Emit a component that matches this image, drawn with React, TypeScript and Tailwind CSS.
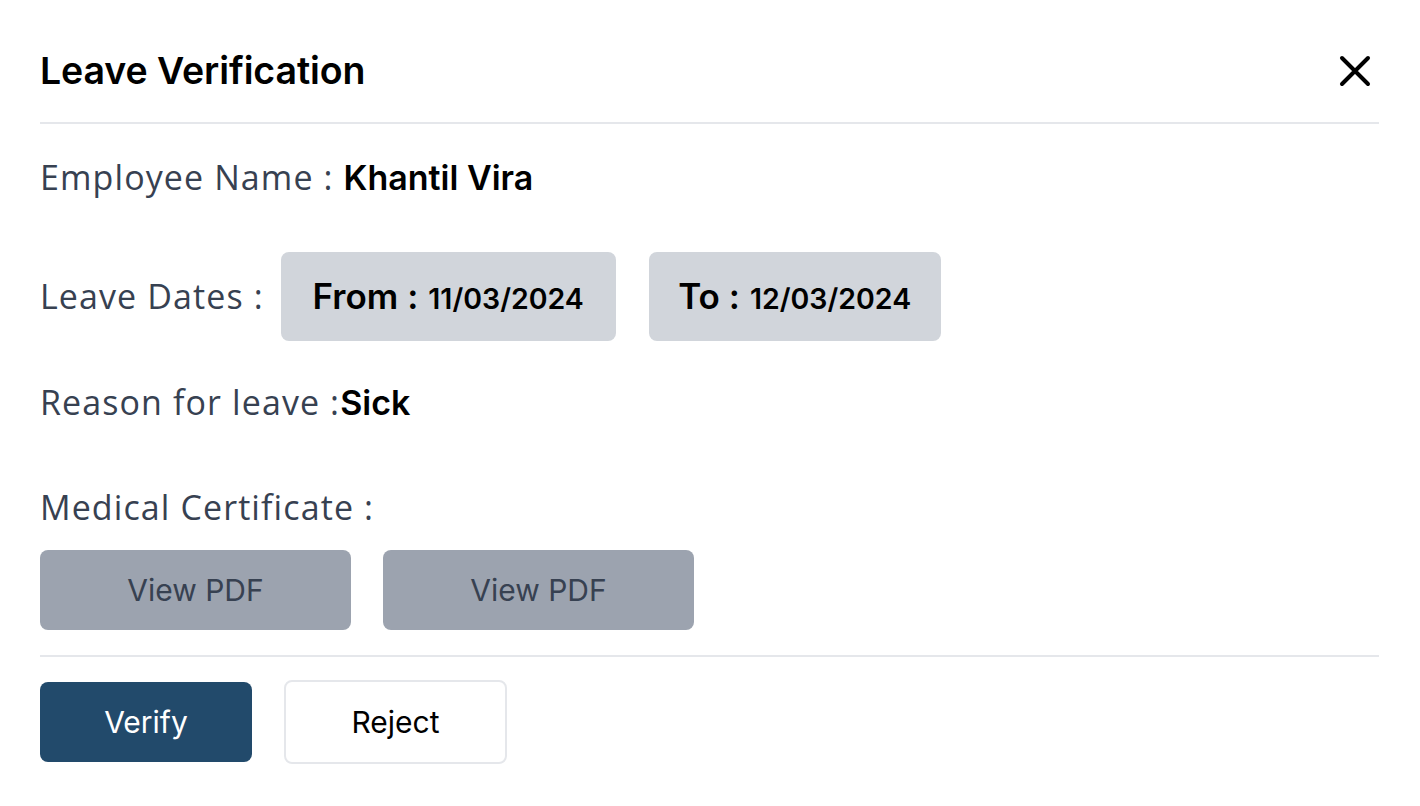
import React from "react";

const label = "font-['Open_Sans','Lato',sans-serif] text-[34px] text-[#374151] tracking-[1.1px]";
const value = "font-['Inter','Roboto',sans-serif] font-semibold text-[34px] text-black tracking-normal";

export default function App() {
  return (
    <div className="w-[1420px] h-[806px] bg-white px-[40px] pt-[42px] overflow-hidden">
      <div className="w-[1339px]">
        <div className="flex items-center justify-between h-[58px]">
          <h1 className="font-['Inter','Roboto',sans-serif] font-semibold text-[37.5px] text-black tracking-[-0.1px]">
            Leave Verification
          </h1>
          <svg width="32" height="32" viewBox="0 0 32 32" className="mr-[8px]">
            <path d="M3 3 L29 29 M29 3 L3 29" stroke="black" strokeWidth="4" strokeLinecap="round" />
          </svg>
        </div>
        <div className="mt-[22px] h-[2px] bg-[#e5e7eb]" />
        <div className="mt-[33px] h-[40px] flex items-center">
          <span className={label}>Employee Name :&nbsp;</span>
          <span className={value}>Khantil Vira</span>
        </div>
        <div className="mt-[55px] flex items-center">
          <span className={label}>Leave Dates :</span>
          <div className="ml-[17px] flex gap-[33px]">
            <div className="h-[89px] w-[335px] rounded-[8px] bg-[#d1d5db] flex items-center justify-center font-['Inter','Roboto',sans-serif] text-black">
              <p className="flex items-baseline">
                <span className="font-semibold text-[35px]">From :</span>
                <span className="font-semibold text-[28.5px] ml-[10px]">11/03/2024</span>
              </p>
            </div>
            <div className="h-[89px] w-[292px] rounded-[8px] bg-[#d1d5db] flex items-center justify-center font-['Inter','Roboto',sans-serif] text-black">
              <p className="flex items-baseline">
                <span className="font-semibold text-[35px]">To :</span>
                <span className="font-semibold text-[28.5px] ml-[10px]">12/03/2024</span>
              </p>
            </div>
          </div>
        </div>
        <div className="mt-[41px] h-[40px] flex items-center">
          <span className={label}>Reason for leave :</span>
          <span className={value}>Sick</span>
        </div>
        <div className="mt-[65px] h-[40px] flex items-center">
          <span className={label}>Medical Certificate :</span>
        </div>
        <div className="mt-[23px] flex gap-[32px]">
          <button className="h-[80px] w-[311px] rounded-[8px] bg-[#9ca3af] text-[#374151] font-['Inter','Roboto',sans-serif] text-[30px]">
            View PDF
          </button>
          <button className="h-[80px] w-[311px] rounded-[8px] bg-[#9ca3af] text-[#374151] font-['Inter','Roboto',sans-serif] text-[30px]">
            View PDF
          </button>
        </div>
        <div className="mt-[25px] h-[2px] bg-[#e5e7eb]" />
        <div className="mt-[23px] flex items-center gap-[32px]">
          <button className="h-[80px] w-[212px] rounded-[8px] bg-[#224a6b] text-white font-['Inter','Roboto',sans-serif] text-[30px]">
            Verify
          </button>
          <button className="h-[84px] w-[223px] rounded-[8px] border-2 border-[#e5e7eb] bg-white text-black font-['Inter','Roboto',sans-serif] text-[30px]">
            Reject
          </button>
        </div>
      </div>
    </div>
  );
}
